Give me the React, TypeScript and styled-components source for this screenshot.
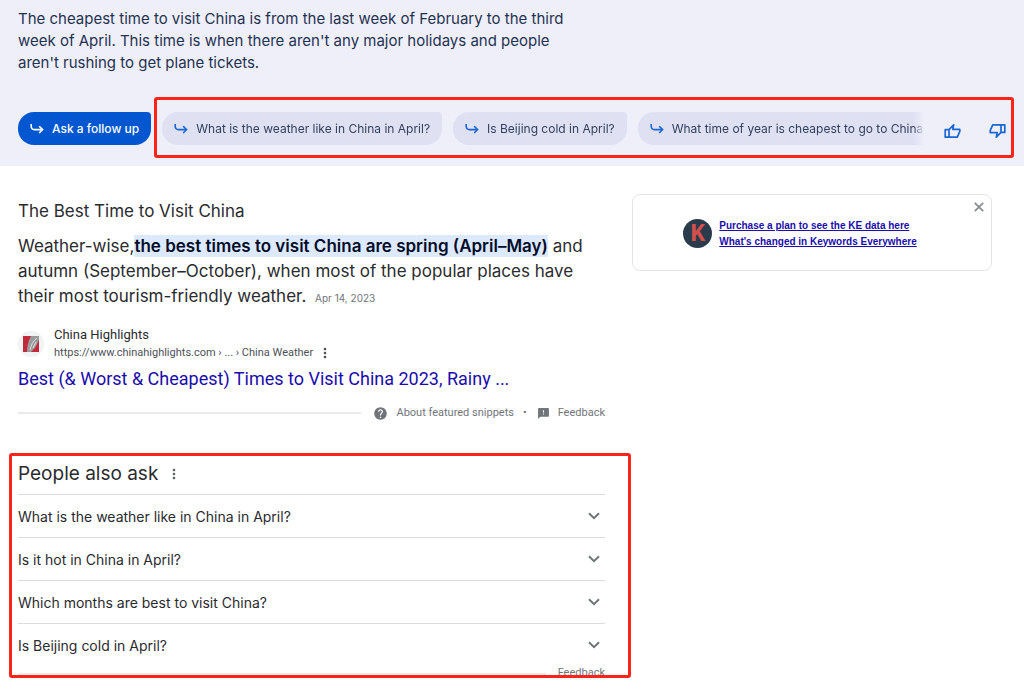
import React from 'react';
import styled, { createGlobalStyle } from 'styled-components';
import { MdFeedback, MdHelp, MdMoreVert } from 'react-icons/md';

const sans = "Inter, 'Open Sans', sans-serif";
const ui = "Roboto, 'Liberation Sans', sans-serif";

const GlobalStyle = createGlobalStyle`
  *, *::before, *::after { box-sizing: border-box; }
  body {
    margin: 0;
    background: #fff;
    color: #2a2b2e;
    font-family: ${sans};
  }
  button {
    margin: 0;
    padding: 0;
    border: 0;
    background: none;
    color: inherit;
    font: inherit;
    cursor: pointer;
  }
  h2, h3, p, ul { margin: 0; padding: 0; font-weight: 400; }
`;

const Highlighted = styled.div`
  border: 3px solid #fb2418;
  border-radius: 3px;
`;

/* Generated answer */

const Answer = styled.section`
  padding: 8px 10px 8px 18px;
  background: #efeffa;
`;

const AnswerText = styled.p`
  max-width: 576px;
  color: #1f3350;
  font-size: 15px;
  line-height: 22px;
`;

const FollowUps = styled.div`
  display: flex;
  align-items: flex-start;
  gap: 3px;
  margin-top: 23px;
`;

const Chip = styled.button<{ $primary?: boolean }>`
  display: flex;
  flex-shrink: 0;
  align-items: center;
  gap: 8px;
  height: 33px;
  padding: 0 12px;
  border-radius: 16px 4px 16px 16px;
  background: ${(p) => (p.$primary ? '#0257d0' : '#dfe1f3')};
  color: ${(p) => (p.$primary ? '#fff' : '#33415f')};
  font-size: 12px;
  font-weight: ${(p) => (p.$primary ? 500 : 400)};
  white-space: nowrap;

  svg { color: ${(p) => (p.$primary ? '#fff' : '#1967d2')}; }
`;

const AskSlot = styled.div`
  padding-top: 15px;
`;

const Suggestions = styled(Highlighted)`
  display: flex;
  flex: 1;
  align-items: center;
  gap: 20px;
  min-width: 0;
  height: 61px;
  padding: 2px 5px 0;
`;

const ChipTrack = styled.div`
  display: flex;
  flex: 1;
  gap: 11px;
  min-width: 0;
  overflow: hidden;
  mask-image: linear-gradient(to right, #000 calc(100% - 10px), transparent);
`;

const Votes = styled.div`
  display: flex;
  gap: 28px;
  padding-top: 4px;
  color: #1967d2;
`;

const IconButton = styled.button`
  display: flex;
  align-items: center;
  justify-content: center;
`;

/* Results */

const Main = styled.main`
  display: grid;
  grid-template-columns: minmax(0, 1fr) 360px;
  align-items: start;
  padding: 28px 32px 0 0;
`;

const Results = styled.div`
  min-width: 0;
`;

const Snippet = styled.section`
  padding: 5px 27px 0 18px;
`;

const SnippetTitle = styled.h2`
  font-size: 17px;
  line-height: 24px;
`;

const SnippetText = styled.p`
  margin-top: 11px;
  font-size: 17px;
  line-height: 25px;

  b {
    padding: 1px 0;
    background: #dde9fd;
    color: #040c28;
    font-weight: 600;
  }

  time {
    margin-left: 4px;
    color: #70757a;
    font-size: 10px;
  }
`;

const Source = styled.div`
  display: flex;
  align-items: center;
  gap: 10px;
  margin-top: 15px;
  font-family: ${ui};
`;

const SourceName = styled.div`
  font-size: 13px;
  line-height: 18px;
`;

const SourceUrl = styled.div`
  display: flex;
  align-items: center;
  gap: 4px;
  color: #4d5156;
  font-size: 11px;
  line-height: 18px;
`;

const ResultLink = styled.a`
  display: block;
  margin-top: 4px;
  color: #1a0dab;
  font-family: ${ui};
  font-size: 18px;
  line-height: 26px;
  text-decoration: none;
`;

const SnippetFooter = styled.div`
  display: flex;
  align-items: center;
  margin-top: 12px;
  color: #70757a;
  font-family: ${ui};
  font-size: 11px;
  line-height: 18px;

  a {
    display: flex;
    align-items: center;
    gap: 8px;
    color: inherit;
    text-decoration: none;
  }
`;

const Rule = styled.span`
  flex: 1;
  height: 2px;
  margin-right: 12px;
  background: #e9eaec;
`;

const Dot = styled.span`
  margin: 0 10px 0 9px;
`;

const PeopleAlsoAsk = styled(Highlighted)`
  margin: 31px 1px 0 9px;
  padding: 0 23px 0 6px;
`;

const AskHeading = styled.div`
  display: flex;
  align-items: center;
  gap: 8px;
  height: 38px;
  padding-bottom: 3px;
  color: #5f6368;

  h2 {
    color: #2a2b2e;
    font-size: 19px;
  }
`;

const Questions = styled.ul`
  list-style: none;
`;

const Question = styled.button`
  display: flex;
  align-items: center;
  justify-content: space-between;
  width: 100%;
  height: 43px;
  padding-right: 5px;
  border-top: 1px solid #dadce0;
  font-size: 14px;
  text-align: left;

  svg { color: #70757a; }
`;

const AskFooter = styled.div`
  display: flex;
  align-items: flex-end;
  height: 9px;
  overflow: hidden;

  a {
    align-self: flex-start;
    color: #70757a;
    font-family: ${ui};
    font-size: 11px;
    line-height: 14px;
    text-decoration: none;
  }
`;

/* Side card */

const Card = styled.aside`
  display: flex;
  height: 77px;
  border: 1px solid #e4e4e6;
  border-radius: 8px;
`;

const CardBody = styled.div`
  display: flex;
  flex: 1;
  align-items: center;
  justify-content: center;
  gap: 7px;
  padding-top: 2px;
`;

const Logo = styled.span`
  width: 29px;
  height: 29px;
  padding-top: 2px;
  border-radius: 50%;
  background: #2a3b4c;
  color: #d2504c;
  font-family: 'Liberation Mono', monospace;
  font-size: 25px;
  font-weight: 700;
  line-height: 28px;
  text-align: center;
`;

const CardLinks = styled.div`
  display: flex;
  flex-direction: column;
  font-family: 'Liberation Sans', Arial, sans-serif;
  font-size: 10px;
  font-weight: 700;
  line-height: 16px;

  a { color: #1a0dab; }
`;

const CloseButton = styled(IconButton)`
  align-self: flex-start;
  width: 24px;
  height: 24px;
  color: #8a8d93;
`;

const TurnArrow = () => (
  <svg width="14" height="12" viewBox="0 0 14 12" fill="none" stroke="currentColor" strokeWidth="1.6" aria-hidden="true">
    <path d="M1.2 1v2.6a3 3 0 0 0 3 3h8" />
    <path d="M9.2 3.2l3.4 3.4-3.4 3.4" />
  </svg>
);

const Thumb = ({ down = false }: { down?: boolean }) => (
  <svg width="17" height="16" viewBox="0 0 17 16" fill="none" stroke="currentColor" strokeWidth="1.7" strokeLinejoin="round" aria-hidden="true">
    <g transform={down ? 'rotate(180 8.5 8)' : undefined}>
      <path d="M5 14.2V6.6L9.7 1.8l-.9 4.6h7v2l-2.5 5.8H1.2V6.6H5" />
    </g>
  </svg>
);

const Chevron = () => (
  <svg width="12" height="8" viewBox="0 0 12 8" fill="none" stroke="currentColor" strokeWidth="2" aria-hidden="true">
    <path d="M1 1.2l5 5 5-5" />
  </svg>
);

const SiteIcon = () => (
  <svg width="26" height="26" viewBox="0 0 26 26" aria-hidden="true">
    <circle cx="13" cy="13" r="12.5" fill="#f1f3f4" stroke="#eceef0" />
    <path d="M5 5h16v16H5z" fill="#c4283c" />
    <path d="M13 5h8v4l-4 8-4 4H9c0-5 1-11 4-16z" fill="#9b9b9b" />
    <path d="M19 7c-4 3-6 7-7 12M18 11l-3 6" stroke="#dedede" strokeWidth="1" fill="none" />
  </svg>
);

const CloseIcon = () => (
  <svg width="10" height="10" viewBox="0 0 10 10" stroke="currentColor" strokeWidth="1.8" aria-hidden="true">
    <path d="M.8.8l8.4 8.4M9.2.8L.8 9.2" />
  </svg>
);

const suggestions = [
  'What is the weather like in China in April?',
  'Is Beijing cold in April?',
  'What time of year is cheapest to go to China?',
];

const questions = [
  'What is the weather like in China in April?',
  'Is it hot in China in April?',
  'Which months are best to visit China?',
  'Is Beijing cold in April?',
];

export default function App() {
  return (
    <>
      <GlobalStyle />
      <Answer>
        <AnswerText>
          The cheapest time to visit China is from the last week of February to the third week of
          April. This time is when there aren't any major holidays and people aren't rushing to get
          plane tickets.
        </AnswerText>
        <FollowUps>
          <AskSlot>
            <Chip $primary>
              <TurnArrow />
              Ask a follow up
            </Chip>
          </AskSlot>
          <Suggestions>
            <ChipTrack>
              {suggestions.map((text) => (
                <Chip key={text}>
                  <TurnArrow />
                  {text}
                </Chip>
              ))}
            </ChipTrack>
            <Votes>
              <IconButton aria-label="Good response">
                <Thumb />
              </IconButton>
              <IconButton aria-label="Bad response">
                <Thumb down />
              </IconButton>
            </Votes>
          </Suggestions>
        </FollowUps>
      </Answer>

      <Main>
        <Results>
          <Snippet>
            <SnippetTitle>The Best Time to Visit China</SnippetTitle>
            <SnippetText>
              Weather-wise,<b>the best times to visit China are spring (April–May)</b> and autumn
              (September–October), when most of the popular places have their most tourism-friendly
              weather. <time dateTime="2023-04-14">Apr 14, 2023</time>
            </SnippetText>
            <Source>
              <SiteIcon />
              <div>
                <SourceName>China Highlights</SourceName>
                <SourceUrl>
                  https://www.chinahighlights.com › ... › China Weather
                  <IconButton aria-label="About this result">
                    <MdMoreVert size={16} />
                  </IconButton>
                </SourceUrl>
              </div>
            </Source>
            <ResultLink href="#result">
              Best (&amp; Worst &amp; Cheapest) Times to Visit China 2023, Rainy ...
            </ResultLink>
            <SnippetFooter>
              <Rule />
              <a href="#about">
                <MdHelp size={15} />
                About featured snippets
              </a>
              <Dot>•</Dot>
              <a href="#feedback">
                <MdFeedback size={13} />
                Feedback
              </a>
            </SnippetFooter>
          </Snippet>

          <PeopleAlsoAsk as="section">
            <AskHeading>
              <h2>People also ask</h2>
              <IconButton aria-label="About these questions">
                <MdMoreVert size={16} />
              </IconButton>
            </AskHeading>
            <Questions>
              {questions.map((text) => (
                <li key={text}>
                  <Question>
                    {text}
                    <Chevron />
                  </Question>
                </li>
              ))}
            </Questions>
            <AskFooter>
              <Rule />
              <a href="#feedback">Feedback</a>
            </AskFooter>
          </PeopleAlsoAsk>
        </Results>

        <Card>
          <CardBody>
            <Logo>K</Logo>
            <CardLinks>
              <a href="#plans">Purchase a plan to see the KE data here</a>
              <a href="#changes">What's changed in Keywords Everywhere</a>
            </CardLinks>
          </CardBody>
          <CloseButton aria-label="Close">
            <CloseIcon />
          </CloseButton>
        </Card>
      </Main>
    </>
  );
}
